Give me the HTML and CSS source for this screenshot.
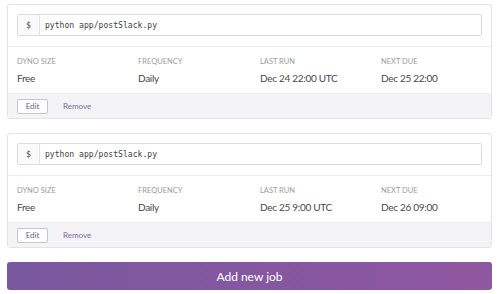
FILE: index.html
```html
<!DOCTYPE html>
<html>
<head>
<meta charset="utf-8">
<link rel="stylesheet" href="styles.css">
</head>
<body>
<div class="page">
  <div class="card">
    <div class="cmd-wrap">
      <div class="cmd">
        <span class="prompt">$</span>
        <span class="cmd-text">python app/postSlack.py</span>
      </div>
    </div>
    <div class="stats">
      <div class="stat"><div class="label">Dyno Size</div><div class="value">Free</div></div>
      <div class="stat"><div class="label">Frequency</div><div class="value">Daily</div></div>
      <div class="stat"><div class="label">Last Run</div><div class="value">Dec 24 22:00 UTC</div></div>
      <div class="stat"><div class="label">Next Due</div><div class="value">Dec 25 22:00</div></div>
    </div>
    <div class="footer">
      <button class="edit">Edit</button>
      <span class="remove">Remove</span>
    </div>
  </div>
  <div class="card">
    <div class="cmd-wrap">
      <div class="cmd">
        <span class="prompt">$</span>
        <span class="cmd-text">python app/postSlack.py</span>
      </div>
    </div>
    <div class="stats">
      <div class="stat"><div class="label">Dyno Size</div><div class="value">Free</div></div>
      <div class="stat"><div class="label">Frequency</div><div class="value">Daily</div></div>
      <div class="stat"><div class="label">Last Run</div><div class="value">Dec 25 9:00 UTC</div></div>
      <div class="stat"><div class="label">Next Due</div><div class="value">Dec 26 09:00</div></div>
    </div>
    <div class="footer">
      <button class="edit">Edit</button>
      <span class="remove">Remove</span>
    </div>
  </div>
  <button class="add">Add new job</button>
</div>
</body>
</html>
```

FILE: styles.css
```css
* { box-sizing: border-box; }
html, body { margin: 0; padding: 0; background: #fff; }
body { font-family: Lato, "Open Sans", sans-serif; color: #3f3f44; }
.page {
  padding: 4px 8px 0 7px;
  display: flex;
  flex-direction: column;
}
.card {
  border: 1px solid #e3e3e6;
  border-radius: 3px;
  margin-bottom: 14px;
  overflow: hidden;
}
.cmd-wrap {
  padding: 9px 9px 10px;
  border-bottom: 1px solid #ececef;
}
.cmd {
  height: 22px;
  border: 1px solid #dcdce0;
  border-radius: 2px;
  display: flex;
  align-items: stretch;
  font-family: "DejaVu Sans Mono", monospace;
  font-size: 8.1px;
  color: #3f3f44;
}
.prompt {
  width: 22px;
  display: flex;
  align-items: center;
  justify-content: center;
  border-right: 1px solid #e3e3e6;
  background: #fafafb;
}
.cmd-text {
  display: flex;
  align-items: center;
  padding-left: 5px;
}
.stats {
  display: grid;
  grid-template-columns: 121px 122px 121px 1fr;
  padding: 10px 9px 0;
  height: 46px;
}
.label {
  font-size: 7.5px;
  text-transform: uppercase;
  color: #9a9aa2;
  line-height: 10px;
}
.value {
  font-size: 10px;
  letter-spacing: -0.3px;
  line-height: 14px;
  margin-top: 4px;
  color: #47474d;
}
.footer {
  background: #f4f4f6;
  border-top: 1px solid #ececef;
  height: 25px;
  display: flex;
  align-items: center;
  padding: 0 9px;
  gap: 15px;
}
.edit {
  font-family: Lato, sans-serif;
  height: 15px;
  width: 31px;
  padding: 0;
  font-size: 8px;
  color: #596981;
  background: #fff;
  border: 1px solid #c9c1da;
  border-radius: 2px;
}
.remove {
  font-size: 8px;
  color: #7e6aa5;
}
.add {
  height: 28px;
  border: none;
  border-radius: 3px;
  background: linear-gradient(to right, #79589f, #8f57a0);
  color: #fff;
  font-family: Lato, sans-serif;
  font-size: 12px;
  padding: 0;
}
```
